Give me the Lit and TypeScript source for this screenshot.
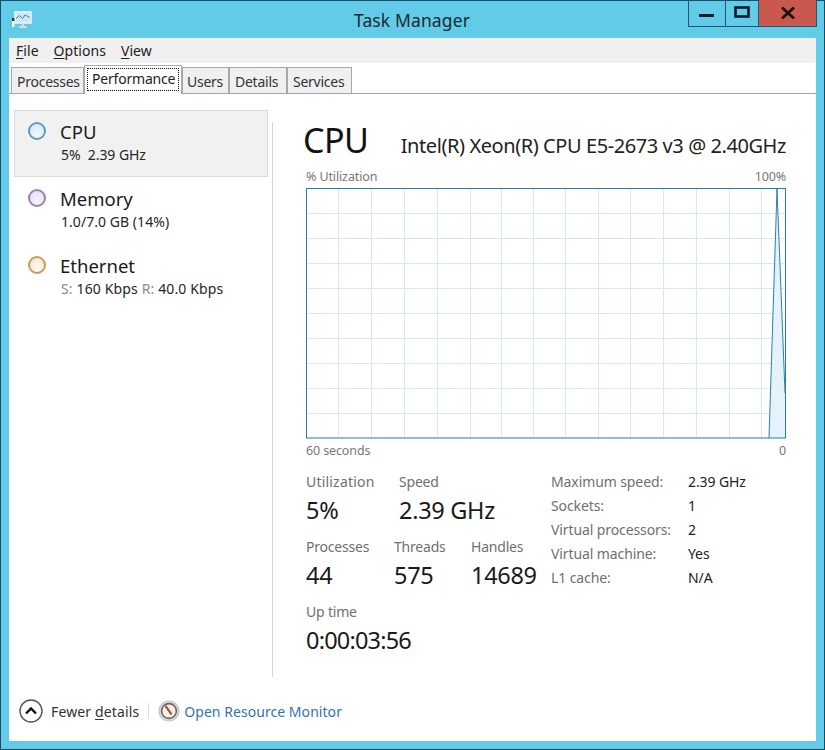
import { LitElement, html, css, svg } from "lit";
import { customElement } from "lit/decorators.js";

const vx = [338, 371, 404, 437, 470, 501, 533, 565, 598, 630, 663, 696, 729, 761];
const hy = [213, 238, 263, 288, 313, 338, 363, 388, 413];

@customElement("app-root")
export class AppRoot extends LitElement {
  static styles = css`
    :host { display: block; width: 825px; height: 750px; font-family: "Noto Sans", "Open Sans", sans-serif; color: #1a1a1a; overflow: hidden; }
    * { box-sizing: border-box; }
    u { text-decoration-thickness: 1px; text-underline-offset: 2px; }
    .win { width: 825px; height: 750px; background: #62cbe8; border: 1px solid #1b4a62; display: flex; flex-direction: column; padding: 0 8px 8px 8px; }
    .bar { height: 37px; display: grid; grid-template-columns: 1fr auto 1fr; align-items: start; flex: none; }
    .appicon { margin: 10px 0 0 2px; display: block; }
    .title { font-size: 17.5px; color: #1c2a30; line-height: 24px; margin-top: 7px; margin-left: -1px; letter-spacing: 0.12px; }
    .btns { display: flex; justify-self: end; height: 27px; border: 1px solid #1d5870; border-top: none; margin-top: -1px; margin-right: -1px; }
    .btn { display: flex; align-items: center; justify-content: center; border-left: 1px solid #1d5870; }
    .btn:first-child { border-left: none; }
    .min { width: 36px; }
    .max { width: 33px; }
    .close { width: 58px; background: #c9584f; }
    .content { flex: 1; background: #fff; display: flex; flex-direction: column; min-height: 0; }
    .menu { height: 25px; background: #f0f0f0; display: flex; gap: 15px; padding-left: 7px; font-size: 14px; line-height: 25px; color: #222; flex: none; letter-spacing: 0.05px; }
    .tabs { height: 31px; display: flex; align-items: flex-end; padding-left: 2px; border-bottom: 1px solid #a5a5a5; flex: none; font-size: 14px; color: #333; letter-spacing: -0.25px; }
    .tab { height: 26px; line-height: 27px; padding: 0 0 0 4px; background: #f0f0f0; border: 1px solid #a8a8a8; border-bottom: none; }
    .tab.on { height: 29px; width: 98px; margin-bottom: -1px; background: #fff; padding: 2px; color: #222; }
    .tab.on span { display: block; height: 23px; line-height: 20px; padding: 0 4px; border: 1px dotted #111; letter-spacing: -0.2px; }
    .tab.t1 { width: 73px; padding-left: 5px; }
    .tab.t3 { width: 47px; }
    .tab.t4 { width: 58px; padding-left: 5px; }
    .tab.t5 { width: 65px; padding-left: 5px; }
    .main { flex: 1; display: flex; min-height: 0; }
    .side { width: 263px; padding: 16px 0 0 5px; flex: none; }
    .item { width: 254px; height: 67px; display: flex; padding: 10px 0 0 14px; gap: 14px; border: 1px solid transparent; }
    .item.on { background: #f1f1f1; border-color: #d9d9d9; }
    .dot { width: 18px; height: 18px; border-radius: 50%; border: 2px solid; margin-top: 1px; margin-left: -1px; flex: none; }
    .dot.c { border-color: #6499bf; background: radial-gradient(circle at 50% 75%, #eff8fd, #d2e6f5); }
    .dot.m { border-color: #9a80b8; background: radial-gradient(circle at 50% 75%, #f8f3fd, #e6daf2); }
    .dot.e { border-color: #d1975a; background: radial-gradient(circle at 50% 75%, #fff8ef, #f9e6cd); }
    .body { margin-top: -1px; }
    .name { font-size: 18.5px; line-height: 24px; color: #1a1a1a; }
    .sub { font-size: 14px; line-height: 20px; color: #262626; margin-top: 1px; margin-left: 1px; letter-spacing: 0.05px; }
    .sub.cpu { letter-spacing: -0.05px; }
    .sub.net { letter-spacing: 0.14px; }
    .sub i { font-style: normal; color: #8a8a8a; }
    .div { width: 1px; background: #d5d5d5; margin-top: 28px; flex: none; }
    .pane { flex: 1; padding: 21px 30px 0 33px; min-width: 0; }
    .head { display: flex; justify-content: space-between; align-items: baseline; height: 49px; margin-left: -3px; }
    .head h1 { font-size: 34px; font-weight: 400; margin: 0; line-height: 50px; color: #111; letter-spacing: -0.5px; }
    .head span { font-size: 20px; color: #222; letter-spacing: -0.42px; }
    .axis { display: flex; justify-content: space-between; font-size: 12.5px; color: #777; line-height: 20px; letter-spacing: -0.12px; }
    .axis.top { height: 21px; margin-top: 3px; }
    .axis.bottom { height: 24px; line-height: 24px; }
    .chart { display: block; width: 480px; height: 251px; }
    .stats { display: flex; margin-top: 9px; }
    .left { width: 245px; flex: none; }
    .row { display: flex; height: 65px; }
    .stat { display: flex; flex-direction: column; }
    .w93 { width: 93px; }
    .w88 { width: 88px; }
    .w77 { width: 77px; }
    .lbl { font-size: 14px; line-height: 20px; color: #6f6f6f; letter-spacing: -0.2px; }
    .lbl.wide { letter-spacing: 0.2px; }
    .val { font-size: 23.5px; line-height: 34px; color: #1a1a1a; margin-top: 1px; letter-spacing: -0.3px; }
    .val.time { letter-spacing: -0.8px; }
    .kv { display: grid; grid-template-columns: 137px auto; grid-auto-rows: 24px; align-content: start; font-size: 14px; line-height: 22px; letter-spacing: -0.1px; color: #222; margin-top: -1px; }
    .kv .k { color: #6f6f6f; }
    .foot { height: 64px; flex: none; display: flex; align-items: center; padding: 4px 0 0 10px; font-size: 14px; }
    .foot svg { display: block; flex: none; }
    .fewer { margin-left: 8px; color: #333; letter-spacing: 0.13px; }
    .sep { width: 1px; height: 16px; background: #dcdcdc; margin: 0 9px 0 9px; }
    .link { color: #2f77a8; margin-left: 4px; letter-spacing: 0.05px; }
  `;

  private chart() {
    return svg`
      <rect x="0.5" y="0.5" width="479" height="249" fill="#fff"/>
      ${vx.map((x) => svg`<line x1=${x - 306 + 0.5} x2=${x - 306 + 0.5} y1="1" y2="250" stroke="#d8e9ee"/>`)}
      ${hy.map((y) => svg`<line x1="1" x2="479" y1=${y - 188 + 0.5} y2=${y - 188 + 0.5} stroke="#d8e9ee"/>`)}
      <path d="M463 250 L471 1 L479 205 L479 250 Z" fill="#e6f2fb" stroke="none"/>
      <path d="M463 250 L471 1 L479 205" fill="none" stroke="#2b7fb3" stroke-width="1"/>
      <rect x="0.5" y="0.5" width="479" height="249.5" fill="none" stroke="#2a7f9f"/>
    `;
  }

  render() {
    return html`
      <div class="win">
        <div class="bar">
          <svg class="appicon" width="22" height="19" viewBox="0 0 22 19">
            <rect x="4" y="1" width="16" height="11" fill="#c9e8f5" stroke="#eef2f4" stroke-width="1.6"/>
            <path d="M5 7.5 L8.5 4.5 L11.5 7.5 L14 4 L19 6.5" fill="none" stroke="#3f86ad" stroke-width="1"/>
            <rect x="1" y="7" width="2.4" height="3" fill="#2c3a44"/>
            <rect x="1" y="10" width="2.4" height="6" fill="#f5f5f5"/>
            <path d="M8 16 H16 M12 12.5 V16" stroke="#d3dde1" stroke-width="2"/>
          </svg>
          <div class="title">Task Manager</div>
          <div class="btns">
            <div class="btn min"><svg width="16" height="16" viewBox="0 0 16 16"><rect x="0" y="9" width="15" height="3" fill="#0b1a28"/></svg></div>
            <div class="btn max"><svg width="16" height="14" viewBox="0 0 16 14"><rect x="1.5" y="1.5" width="13" height="9" fill="none" stroke="#0b1a28" stroke-width="2.6"/></svg></div>
            <div class="btn close"><svg width="14" height="12" viewBox="0 0 14 12"><path d="M1 0.5 L13 11.5 M13 0.5 L1 11.5" stroke="#1a1210" stroke-width="2.8"/></svg></div>
          </div>
        </div>
        <div class="content">
          <div class="menu"><span><u>F</u>ile</span><span><u>O</u>ptions</span><span><u>V</u>iew</span></div>
          <div class="tabs">
            <div class="tab t1">Processes</div>
            <div class="tab on"><span>Performance</span></div>
            <div class="tab t3">Users</div>
            <div class="tab t4">Details</div>
            <div class="tab t5">Services</div>
          </div>
          <div class="main">
            <div class="side">
              <div class="item on"><div class="dot c"></div><div class="body"><div class="name">CPU</div><div class="sub cpu">5%&nbsp; 2.39 GHz</div></div></div>
              <div class="item"><div class="dot m"></div><div class="body"><div class="name">Memory</div><div class="sub">1.0/7.0 GB (14%)</div></div></div>
              <div class="item"><div class="dot e"></div><div class="body"><div class="name">Ethernet</div><div class="sub net"><i>S:</i> 160 Kbps <i>R:</i> 40.0 Kbps</div></div></div>
            </div>
            <div class="div"></div>
            <div class="pane">
              <div class="head"><h1>CPU</h1><span>Intel(R) Xeon(R) CPU E5-2673 v3 @ 2.40GHz</span></div>
              <div class="axis top"><span>% Utilization</span><span>100%</span></div>
              <svg class="chart" viewBox="0 0 480 251">${this.chart()}</svg>
              <div class="axis bottom"><span>60 seconds</span><span>0</span></div>
              <div class="stats">
                <div class="left">
                  <div class="row">
                    <div class="stat w93"><span class="lbl wide">Utilization</span><span class="val">5%</span></div>
                    <div class="stat"><span class="lbl">Speed</span><span class="val">2.39 GHz</span></div>
                  </div>
                  <div class="row">
                    <div class="stat w88"><span class="lbl">Processes</span><span class="val">44</span></div>
                    <div class="stat w77"><span class="lbl">Threads</span><span class="val">575</span></div>
                    <div class="stat"><span class="lbl">Handles</span><span class="val">14689</span></div>
                  </div>
                  <div class="row">
                    <div class="stat"><span class="lbl">Up time</span><span class="val time">0:00:03:56</span></div>
                  </div>
                </div>
                <div class="kv">
                  <span class="k">Maximum speed:</span><span>2.39 GHz</span>
                  <span class="k">Sockets:</span><span>1</span>
                  <span class="k">Virtual processors:</span><span>2</span>
                  <span class="k">Virtual machine:</span><span>Yes</span>
                  <span class="k">L1 cache:</span><span>N/A</span>
                </div>
              </div>
            </div>
          </div>
          <div class="foot">
            <svg width="24" height="24" viewBox="0 0 24 24"><circle cx="12" cy="12" r="11" fill="#fff" stroke="#555" stroke-width="1.4"/><path d="M7 14.5 L12 9.5 L17 14.5" fill="none" stroke="#111" stroke-width="2.4"/></svg>
            <span class="fewer">Fewer <u>d</u>etails</span>
            <div class="sep"></div>
            <svg width="22" height="22" viewBox="0 0 22 22">
              <circle cx="11" cy="11" r="10" fill="#d9dcdd" stroke="#c2c6c8" stroke-width="1.2"/>
              <circle cx="11" cy="11" r="7.4" fill="#f5efe6" stroke="#6b6560" stroke-width="1.6"/>
              <path d="M7.5 5.8 L13.5 14.5" stroke="#a9502b" stroke-width="2.2"/>
            </svg>
            <span class="link">Open Resource Monitor</span>
          </div>
        </div>
      </div>
    `;
  }
}
